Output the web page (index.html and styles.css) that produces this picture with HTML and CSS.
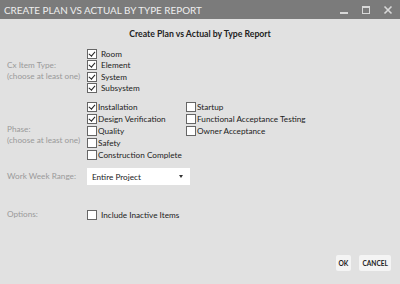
FILE: index.html
```html
<!DOCTYPE html>
<html lang="en">
<head>
    <meta charset="UTF-8">
    <title>Create Plan vs Actual by Type Report</title>
    <link rel="stylesheet" href="styles.css">
</head>
<body>
    <div class="window">
        <div class="titlebar">
            <span class="title">CREATE PLAN VS ACTUAL BY TYPE REPORT</span>
            <div class="controls">
                <svg width="10" height="10" viewBox="0 0 10 10"><rect x="1" y="7" width="8" height="2" fill="#d8d8d8"/></svg>
                <svg width="10" height="10" viewBox="0 0 10 10"><rect x="1.5" y="1.5" width="7" height="7" fill="none" stroke="#d8d8d8"/><rect x="1" y="1" width="8" height="2" fill="#d8d8d8"/></svg>
                <svg width="10" height="10" viewBox="0 0 10 10"><path d="M1.5 1.5 L8.5 8.5 M8.5 1.5 L1.5 8.5" stroke="#d8d8d8" stroke-width="1.6"/></svg>
            </div>
        </div>

        <div class="content">
            <h2>Create Plan vs Actual by Type Report</h2>

            <div class="row row-cx">
                <div class="label">Cx Item Type:<br>(choose at least one)</div>
                <div class="checks spaced">
                    <label class="check"><span class="box on"></span>Room</label>
                    <label class="check"><span class="box on"></span>Element</label>
                    <label class="check"><span class="box on"></span>System</label>
                    <label class="check"><span class="box on"></span>Subsystem</label>
                </div>
            </div>

            <div class="row row-phase">
                <div class="label">Phase:<br>(choose at least one)</div>
                <div class="phase-cols">
                    <div class="checks">
                        <label class="check"><span class="box on"></span>Installation</label>
                        <label class="check"><span class="box on"></span>Design Verification</label>
                        <label class="check"><span class="box"></span>Quality</label>
                        <label class="check"><span class="box"></span>Safety</label>
                        <label class="check"><span class="box"></span>Construction Complete</label>
                    </div>
                    <div class="checks">
                        <label class="check"><span class="box"></span>Startup</label>
                        <label class="check"><span class="box"></span>Functional Acceptance Testing</label>
                        <label class="check"><span class="box"></span>Owner Acceptance</label>
                    </div>
                </div>
            </div>

            <div class="row row-week">
                <div class="label">Work Week Range:</div>
                <div class="select">
                    <span>Entire Project</span>
                    <span class="arrow"></span>
                </div>
            </div>

            <div class="row row-options">
                <div class="label">Options:</div>
                <div class="checks spaced">
                    <label class="check"><span class="box"></span>Include Inactive Items</label>
                </div>
            </div>

            <div class="buttons">
                <button>OK</button>
                <button>CANCEL</button>
            </div>
        </div>
    </div>
</body>
</html>
```

FILE: styles.css
```css
/* Dialog window */
body {
    margin: 0;
    font-family: Lato, Arial, sans-serif;
    background-color: #e1e1e1;
}
.window {
    width: 400px;
    height: 284px;
    display: flex;
    flex-direction: column;
}
.titlebar {
    height: 19px;
    background-color: #7b7b7b;
    display: flex;
    align-items: center;
    justify-content: space-between;
    padding: 0 7px 0 4px;
}
.title {
    color: #eeeeee;
    font-size: 9.9px;
}
.controls {
    display: flex;
    gap: 12px;
}
.content {
    flex: 1;
    display: flex;
    flex-direction: column;
}
h2 {
    margin: 9px 0 9px;
    font-size: 8.7px;
    text-align: center;
    color: #222;
}
.row {
    display: flex;
    align-items: center;
}
.label {
    width: 80px;
    padding-left: 7px;
    color: #9a9a9a;
    font-size: 8.2px;
    line-height: 11.5px;
    white-space: nowrap;
}
.checks {
    display: flex;
    flex-direction: column;
}
.check {
    display: flex;
    align-items: center;
    height: 11.5px;
    font-size: 8.2px;
    color: #222;
    white-space: nowrap;
}
.box {
    flex: none;
    width: 8px;
    height: 8px;
    border: 1px solid #666;
    background: #fff;
    margin-right: 1px;
    position: relative;
}
.spaced .box {
    margin-right: 4px;
}
.box.on::after {
    content: "";
    position: absolute;
    left: 2px;
    top: 0;
    width: 2.5px;
    height: 5px;
    border: solid #222;
    border-width: 0 1.5px 1.5px 0;
    transform: rotate(40deg);
}
.row-phase {
    margin-top: 7px;
}
.row-phase .label {
    padding-top: 8px;
}
.phase-cols {
    display: flex;
    gap: 8px;
    align-items: flex-start;
}
.phase-cols .checks:first-child {
    width: 91px;
}
.phase-cols .check {
    height: 12px;
}
.row-week {
    margin-top: 7px;
}
.select {
    width: 91px;
    height: 17px;
    background: #fff;
    display: flex;
    align-items: center;
    justify-content: space-between;
    padding: 0 7px 0 5px;
    font-size: 8.2px;
    color: #222;
}
.arrow {
    width: 0;
    height: 0;
    border-left: 2.5px solid transparent;
    border-right: 2.5px solid transparent;
    border-top: 3px solid #333;
}
.row-options {
    margin-top: 24px;
}
.buttons {
    margin-top: auto;
    margin-bottom: 13px;
    display: flex;
    justify-content: flex-end;
    gap: 8px;
    padding-right: 9px;
}
button {
    background-color: #f4f4f4;
    border: none;
    border-radius: 2px;
    height: 16px;
    padding: 0 3px;
    font-family: Lato, Arial, sans-serif;
    font-size: 6.6px;
    font-weight: bold;
    color: #222;
}
```
